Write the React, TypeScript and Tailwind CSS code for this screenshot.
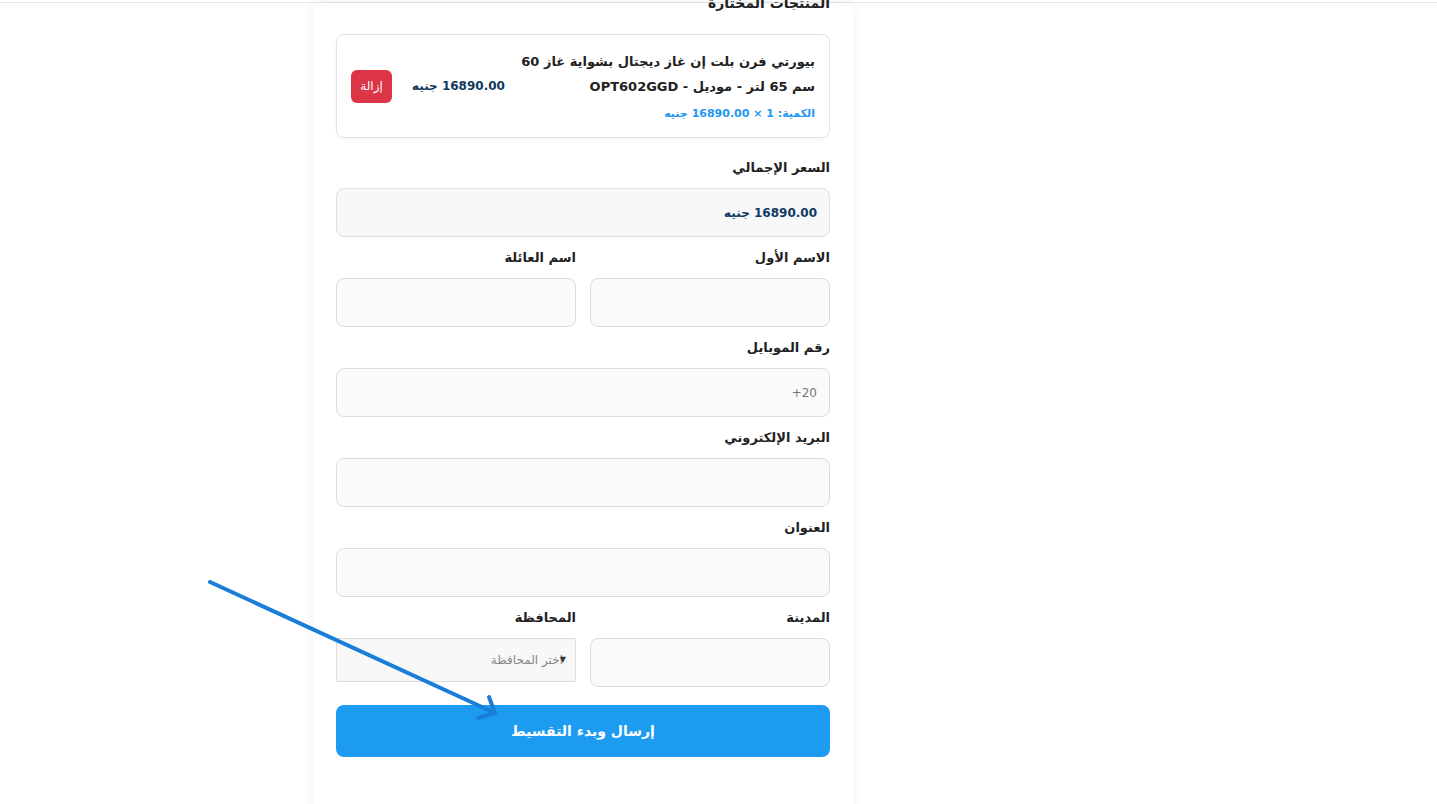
import React from "react";

function Field({ label, children }: { label: string; children: React.ReactNode }) {
  return (
    <div>
      <label className="block text-[13px] leading-[20px] font-bold text-[#222] mb-[10px]">{label}</label>
      {children}
    </div>
  );
}

function Input({ placeholder }: { placeholder?: string }) {
  return (
    <div className="h-[49px] w-full bg-[#fafafa] border border-[#dcdcdc] rounded-lg flex items-center px-3 text-[12px] text-[#777]">
      {placeholder && <span dir="ltr">{placeholder}</span>}
    </div>
  );
}

export default function App() {
  return (
    <div
      dir="rtl"
      className="relative h-screen overflow-hidden bg-white font-['DejaVu_Sans',sans-serif]"
    >
      <div className="h-[3px] border-b border-[#e6e6e6]" />

      <div dir="ltr" className="flex pl-[313px]">
        <div dir="rtl" className="w-[540px] bg-white shadow-[0_0_12px_rgba(0,0,0,0.06)] px-[23px] pb-[60px]">
          <h2 className="-mt-[12px] text-[14px] leading-[24px] font-bold text-[#222]">المنتجات المختارة</h2>

          {/* product */}
          <div className="mt-[19px] h-[104px] border border-[#e2e2e2] rounded-lg shadow-[0_1px_3px_rgba(0,0,0,0.05)] flex items-center justify-between px-[14px]">
            <div className="w-[300px]">
              <p className="text-[13px] leading-[25px] font-semibold text-[#222]">
                بيورتي فرن بلت إن غاز ديجتال بشواية غاز 60 سم 65 لتر - موديل - OPT602GGD
              </p>
              <p className="mt-[5px] text-[11px] leading-[20px] font-semibold text-[#2196f3]">
                الكمية: 1 × 16890.00 جنيه
              </p>
            </div>
            <div className="flex items-center gap-[20px]">
              <span className="text-[12px] font-bold text-[#0f3a5f]">16890.00 جنيه</span>
              <button className="w-[41px] h-[33px] rounded-md bg-[#dc3545] text-white text-[12px]">إزالة</button>
            </div>
          </div>

          <div className="mt-[20px] flex flex-col gap-[11px]">
            <Field label="السعر الإجمالي">
              <div className="h-[49px] bg-[#f7f8fa] border border-[#dcdfe3] rounded-lg flex items-center px-3 text-[12px] font-bold text-[#0f3a5f]">
                16890.00 جنيه
              </div>
            </Field>

            <div className="grid grid-cols-2 gap-[14px]">
              <Field label="الاسم الأول">
                <Input />
              </Field>
              <Field label="اسم العائلة">
                <Input />
              </Field>
            </div>

            <Field label="رقم الموبايل">
              <Input placeholder="+20" />
            </Field>

            <Field label="البريد الإلكتروني">
              <Input />
            </Field>

            <Field label="العنوان">
              <Input />
            </Field>

            <div className="grid grid-cols-2 gap-[14px] items-start">
              <Field label="المدينة">
                <Input />
              </Field>
              <Field label="المحافظة">
                <div className="relative h-[44px] bg-[#f8f8f8] border border-[#dcdcdc] rounded-[2px] flex items-center pr-[12px] text-[12px] text-[#888]">
                  اختر المحافظة
                  <span className="absolute right-[9px] top-1/2 -translate-y-1/2 text-[8px] text-[#333]">▼</span>
                </div>
              </Field>
            </div>
          </div>

          <button className="mt-[18px] w-full h-[52px] rounded-lg bg-[#1d9bf0] text-white text-[14px] font-bold">
            إرسال وبدء التقسيط
          </button>
        </div>
      </div>

      {/* annotation arrow */}
      <svg className="absolute inset-0 pointer-events-none" width="1437" height="804">
        <g stroke="#1a7ed8" strokeWidth="4" strokeLinecap="round" strokeLinejoin="round" fill="none">
          <path d="M210 582 L495 713" />
          <path d="M489 697 L495 713 L478 718" />
        </g>
      </svg>
    </div>
  );
}
